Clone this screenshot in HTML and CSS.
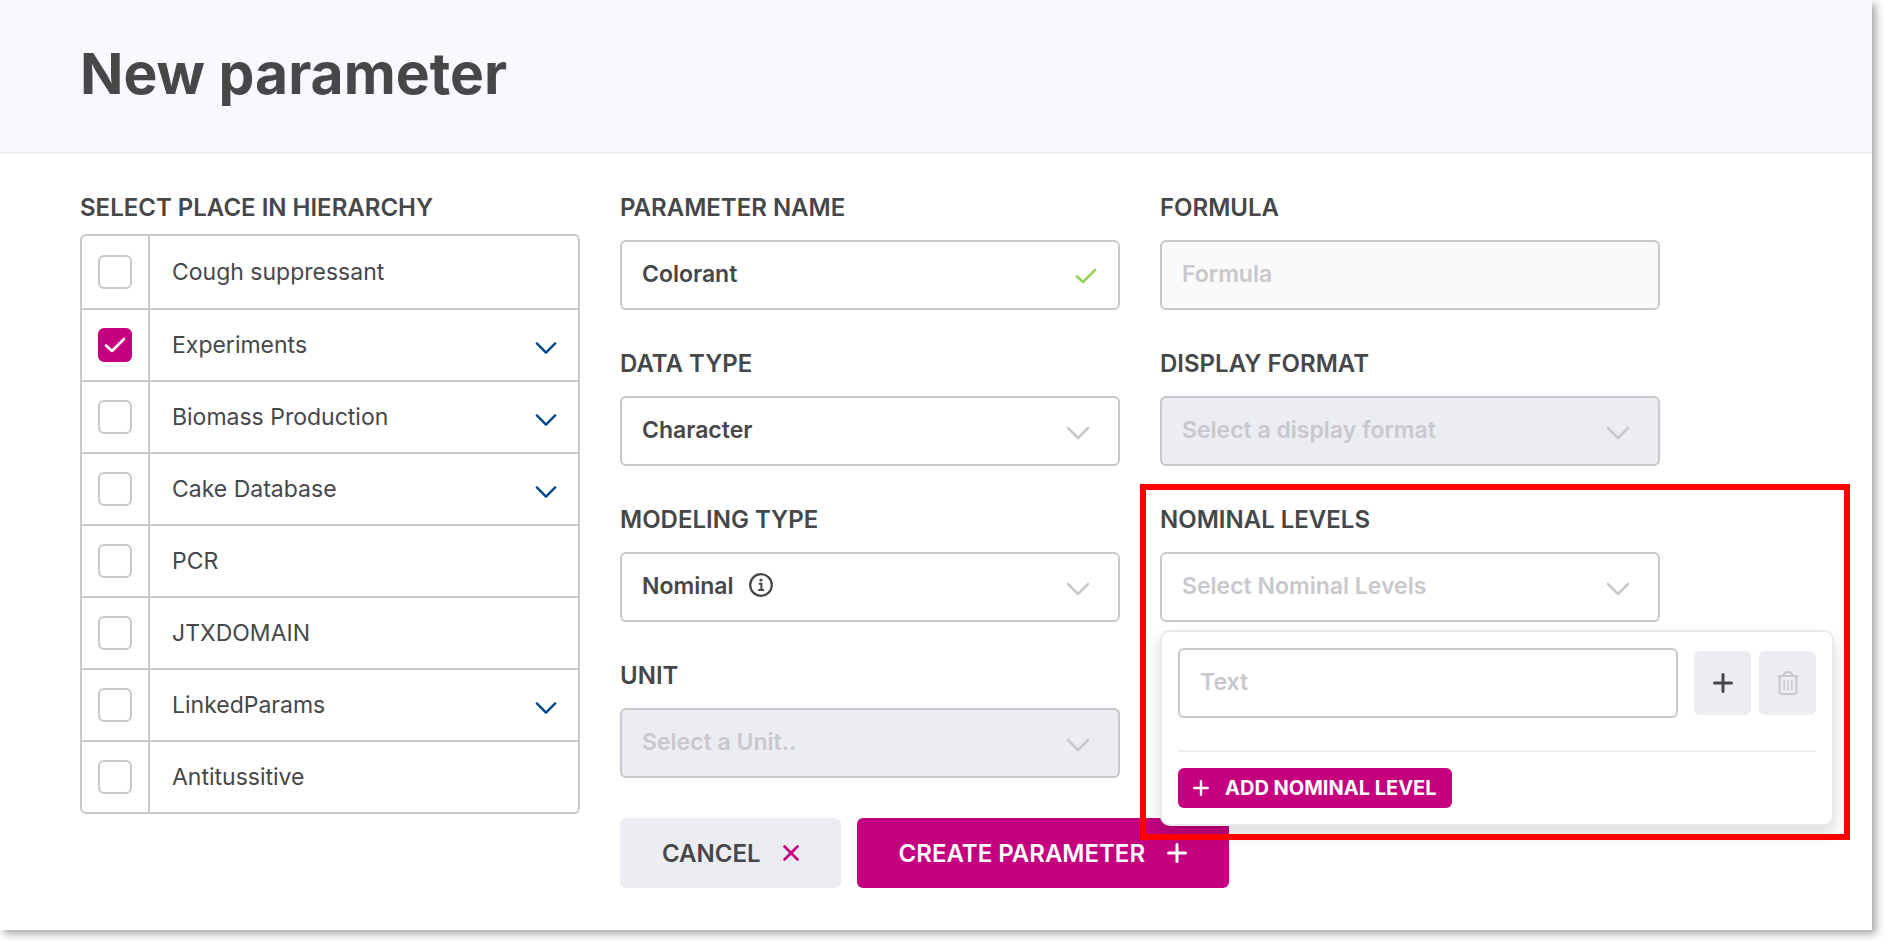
FILE: index.html
```
<!DOCTYPE html>
<html lang="en">

<head>
    <meta charset="UTF-8">
    <meta name="viewport" content="width=device-width, initial-scale=1.0">
    <title>New parameter</title>
    <link rel="stylesheet" href="styles.css">
</head>

<body>
    <svg class="sprite" aria-hidden="true">
        <symbol id="chevron" viewBox="0 0 24 14">
            <path d="M2 2 L12 12 L22 2" fill="none" stroke="currentColor" stroke-width="2.6" stroke-linecap="round" stroke-linejoin="round" />
        </symbol>
        <symbol id="check" viewBox="0 0 22 16">
            <path d="M2 8.5 L8 14 L20 2" fill="none" stroke="currentColor" stroke-width="2.6" stroke-linecap="round" stroke-linejoin="round" />
        </symbol>
        <symbol id="plus" viewBox="0 0 20 20">
            <path d="M10 1.5 V18.5 M1.5 10 H18.5" fill="none" stroke="currentColor" stroke-width="3" stroke-linecap="round" />
        </symbol>
    </svg>

    <div class="page">
        <header class="page-header">
            <h1>New parameter</h1>
        </header>

        <form class="form">
            <section class="hierarchy">
                <h2 class="label">SELECT PLACE IN HIERARCHY</h2>
                <ul class="tree">
                    <li>
                        <span class="tick"><input type="checkbox" id="node1"></span>
                        <label for="node1">Cough suppressant</label>
                    </li>
                    <li>
                        <span class="tick"><input type="checkbox" id="node2" checked><svg><use href="#check" /></svg></span>
                        <label for="node2">Experiments</label>
                        <button type="button" class="expand" aria-label="Expand Experiments"><svg><use href="#chevron" /></svg></button>
                    </li>
                    <li>
                        <span class="tick"><input type="checkbox" id="node3"></span>
                        <label for="node3">Biomass Production</label>
                        <button type="button" class="expand" aria-label="Expand Biomass Production"><svg><use href="#chevron" /></svg></button>
                    </li>
                    <li>
                        <span class="tick"><input type="checkbox" id="node4"></span>
                        <label for="node4">Cake Database</label>
                        <button type="button" class="expand" aria-label="Expand Cake Database"><svg><use href="#chevron" /></svg></button>
                    </li>
                    <li>
                        <span class="tick"><input type="checkbox" id="node5"></span>
                        <label for="node5">PCR</label>
                    </li>
                    <li>
                        <span class="tick"><input type="checkbox" id="node6"></span>
                        <label for="node6">JTXDOMAIN</label>
                    </li>
                    <li>
                        <span class="tick"><input type="checkbox" id="node7"></span>
                        <label for="node7">LinkedParams</label>
                        <button type="button" class="expand" aria-label="Expand LinkedParams"><svg><use href="#chevron" /></svg></button>
                    </li>
                    <li>
                        <span class="tick"><input type="checkbox" id="node8"></span>
                        <label for="node8">Antitussitive</label>
                    </li>
                </ul>
            </section>

            <div class="column">
                <div class="field">
                    <label class="label" for="name">PARAMETER NAME</label>
                    <div class="control">
                        <input type="text" id="name" value="Colorant">
                        <svg class="valid"><use href="#check" /></svg>
                    </div>
                </div>
                <div class="field">
                    <label class="label" for="data-type">DATA TYPE</label>
                    <div class="control">
                        <select id="data-type">
                            <option>Character</option>
                        </select>
                        <svg class="arrow"><use href="#chevron" /></svg>
                    </div>
                </div>
                <div class="field">
                    <label class="label" for="modeling-type">MODELING TYPE</label>
                    <div class="control">
                        <select id="modeling-type">
                            <option>Nominal</option>
                        </select>
                        <svg class="info" viewBox="0 0 24 24">
                            <circle cx="12" cy="12" r="10.8" fill="none" stroke="currentColor" stroke-width="2.2" />
                            <circle cx="12" cy="7" r="1.6" fill="currentColor" />
                            <path d="M9.8 10.800 H12.4 V16.500 M9.2 17 H15" fill="none" stroke="currentColor" stroke-width="2" />
                        </svg>
                        <svg class="arrow"><use href="#chevron" /></svg>
                    </div>
                </div>
                <div class="field">
                    <label class="label" for="unit">UNIT</label>
                    <div class="control">
                        <select id="unit" disabled>
                            <option>Select a Unit..</option>
                        </select>
                        <svg class="arrow"><use href="#chevron" /></svg>
                    </div>
                </div>
                <div class="actions">
                    <button type="button" class="btn cancel">CANCEL
                        <svg viewBox="0 0 16 16"><path d="M1.5 1.5 L14.5 14.5 M14.5 1.5 L1.5 14.5" fill="none" stroke="currentColor" stroke-width="2.6" stroke-linecap="round" /></svg>
                    </button>
                    <button type="submit" class="btn create">CREATE PARAMETER
                        <svg><use href="#plus" /></svg>
                    </button>
                </div>
            </div>

            <div class="column">
                <div class="field">
                    <label class="label" for="formula">FORMULA</label>
                    <div class="control">
                        <input type="text" id="formula" class="readonly" placeholder="Formula" readonly>
                    </div>
                </div>
                <div class="field">
                    <label class="label" for="format">DISPLAY FORMAT</label>
                    <div class="control">
                        <select id="format" disabled>
                            <option>Select a display format</option>
                        </select>
                        <svg class="arrow"><use href="#chevron" /></svg>
                    </div>
                </div>
                <div class="field">
                    <label class="label" for="levels">NOMINAL LEVELS</label>
                    <div class="control">
                        <select id="levels" class="empty">
                            <option>Select Nominal Levels</option>
                        </select>
                        <svg class="arrow"><use href="#chevron" /></svg>

                        <div class="popup">
                            <div class="level">
                                <input type="text" placeholder="Text" aria-label="Nominal level">
                                <div class="level-buttons">
                                    <button type="button" aria-label="Add"><svg class="add-icon"><use href="#plus" /></svg></button>
                                    <button type="button" aria-label="Delete" disabled>
                                        <svg class="trash" viewBox="0 0 22 24" fill="none" stroke="currentColor" stroke-width="2" stroke-linecap="round" stroke-linejoin="round">
                                            <path d="M1 5 H21 M6.500 4.500 Q7.500 1.300 9 1.300 H13 Q14.500 1.300 15.500 4.500 M2.500 5.500 V20.500 Q2.500 23 5 23 H17 Q19.500 23 19.500 20.500 V5.500" />
                                            <path d="M7.200 9.500 V18.800 M11 9.500 V18.800 M14.800 9.500 V18.800" stroke-width="1.500" />
                                        </svg>
                                    </button>
                                </div>
                            </div>
                            <hr>
                            <button type="button" class="add-level"><svg><use href="#plus" /></svg>ADD NOMINAL LEVEL</button>
                            <div class="highlight"></div>
                        </div>
                    </div>
                </div>
            </div>
        </form>
    </div>
</body>

</html>
```
FILE: styles.css
```
* {
    box-sizing: border-box;
}

body {
    margin: 0;
    background-color: #fff;
    color: #464749;
    font-family: Inter, sans-serif;
    font-size: 23px;
}

input,
select,
button {
    font-family: inherit;
    font-size: inherit;
    color: inherit;
}

button {
    border: none;
    cursor: pointer;
}

.sprite {
    display: none;
}

.page {
    margin: 0 12px 12px 0;
    min-height: calc(100vh - 12px);
    background-color: #fff;
    box-shadow: 4px 4px 8px rgba(0, 0, 0, 0.35);
}

.page-header {
    padding: 38px 80px 42px;
    background-color: #f8f9fd;
    border-bottom: 2px solid #ecedf2;
}

h1 {
    margin: 0;
    font-size: 57px;
    line-height: 72px;
    font-weight: 700;
}

.form {
    display: grid;
    grid-template-columns: repeat(3, minmax(0, 500px));
    gap: 40px;
    padding: 40px 80px;
}

.label {
    display: block;
    margin: 0;
    font-size: 24px;
    line-height: 28px;
    font-weight: 600;
}

/* hierarchy list */
.tree {
    margin: 12px 0 0;
    padding: 0;
    list-style: none;
    border: 2px solid #c8c8cd;
    border-radius: 6px;
}

.tree li {
    display: flex;
    align-items: center;
    height: 70px;
}

.tree li:first-child {
    height: 72px;
}

.tree li + li {
    box-sizing: content-box;
    border-top: 2px solid #c8c8cd;
}

.tick {
    position: relative;
    display: flex;
    align-items: center;
    align-self: stretch;
    padding: 0 16px;
    border-right: 2px solid #c8c8cd;
}

.tick input {
    appearance: none;
    width: 34px;
    height: 34px;
    margin: 0;
    border: 2px solid #c8c8cd;
    border-radius: 6px;
    background-color: #fff;
}

.tick input:checked {
    border-color: #c5007f;
    background-color: #c5007f;
}

.tick svg {
    position: absolute;
    left: 22px;
    width: 22px;
    height: 16px;
    color: #fff;
    pointer-events: none;
}

.tree label {
    flex: 1;
    padding-left: 22px;
}

.expand {
    padding: 6px 21px 0;
    background: none;
    color: #004b87;
}

.expand svg {
    display: block;
    width: 22px;
    height: 14px;
}

/* fields */
.column {
    display: flex;
    flex-direction: column;
    gap: 40px;
}

.control {
    position: relative;
    margin-top: 18px;
}

.column input,
.column select {
    display: block;
    width: 100%;
    height: 70px;
    padding: 0 20px 2px;
    border: 2px solid #c8c8cd;
    border-radius: 6px;
    background-color: #fff;
    font-weight: 600;
    appearance: none;
    opacity: 1;
}

.column input::placeholder {
    color: #c8c8cd;
    opacity: 1;
}

.column .readonly {
    background-color: #fafafa;
}

.column select:disabled {
    background-color: #ecedf2;
    color: #c8c8cd;
}

.column .empty {
    color: #c8c8cd;
}

.arrow,
.valid,
.info {
    position: absolute;
    pointer-events: none;
}

.arrow {
    right: 30px;
    top: 30px;
    width: 24px;
    height: 14px;
    color: #c8c8cd;
}

.valid {
    right: 23px;
    top: 28px;
    width: 22px;
    height: 16px;
    color: #97d556;
}

.info {
    left: 129px;
    top: 21px;
    width: 24px;
    height: 24px;
}

/* bottom buttons */
.actions {
    display: flex;
    gap: 16px;
}

.btn {
    display: flex;
    flex: none;
    align-items: center;
    gap: 22px;
    height: 70px;
    padding: 0 42px;
    border-radius: 6px;
    font-size: 24px;
    font-weight: 600;
    white-space: nowrap;
}

.cancel {
    background-color: #ecedf2;
}

.cancel svg {
    width: 16px;
    height: 16px;
    color: #c5007f;
}

.create {
    background-color: #c5007f;
    color: #fff;
}

.create svg {
    width: 20px;
    height: 20px;
}

/* nominal levels popup */
.popup {
    position: absolute;
    top: 78px;
    left: 0;
    z-index: 1;
    width: 674px;
    padding: 16px;
    background-color: #fff;
    border: 2px solid #e9e9eb;
    border-radius: 10px;
    box-shadow: 0 8px 16px rgba(0, 0, 0, 0.15);
}

.level {
    display: flex;
    align-items: center;
    gap: 16px;
}

.level input {
    flex: 1;
}

.level-buttons {
    display: flex;
    gap: 8px;
}

.level-buttons button {
    display: flex;
    align-items: center;
    justify-content: center;
    width: 57px;
    height: 64px;
    padding: 0;
    border-radius: 6px;
    background-color: #ecedf2;
}

.level-buttons button:disabled {
    color: #c8c8cd;
}

.add-icon {
    width: 20px;
    height: 20px;
}

.trash {
    width: 22px;
    height: 24px;
}

.popup hr {
    margin: 32px 0 16px;
    border: none;
    border-top: 2px solid #ecedf2;
}

.add-level {
    display: flex;
    align-items: center;
    gap: 16px;
    height: 40px;
    padding: 0 15px;
    border-radius: 6px;
    background-color: #c5007f;
    color: #fff;
    font-size: 20px;
    font-weight: 700;
}

.add-level svg {
    width: 16px;
    height: 16px;
}

.highlight {
    position: absolute;
    inset: -148px -18px -16px -22px;
    border: 6px solid #f00;
    pointer-events: none;
}
```
